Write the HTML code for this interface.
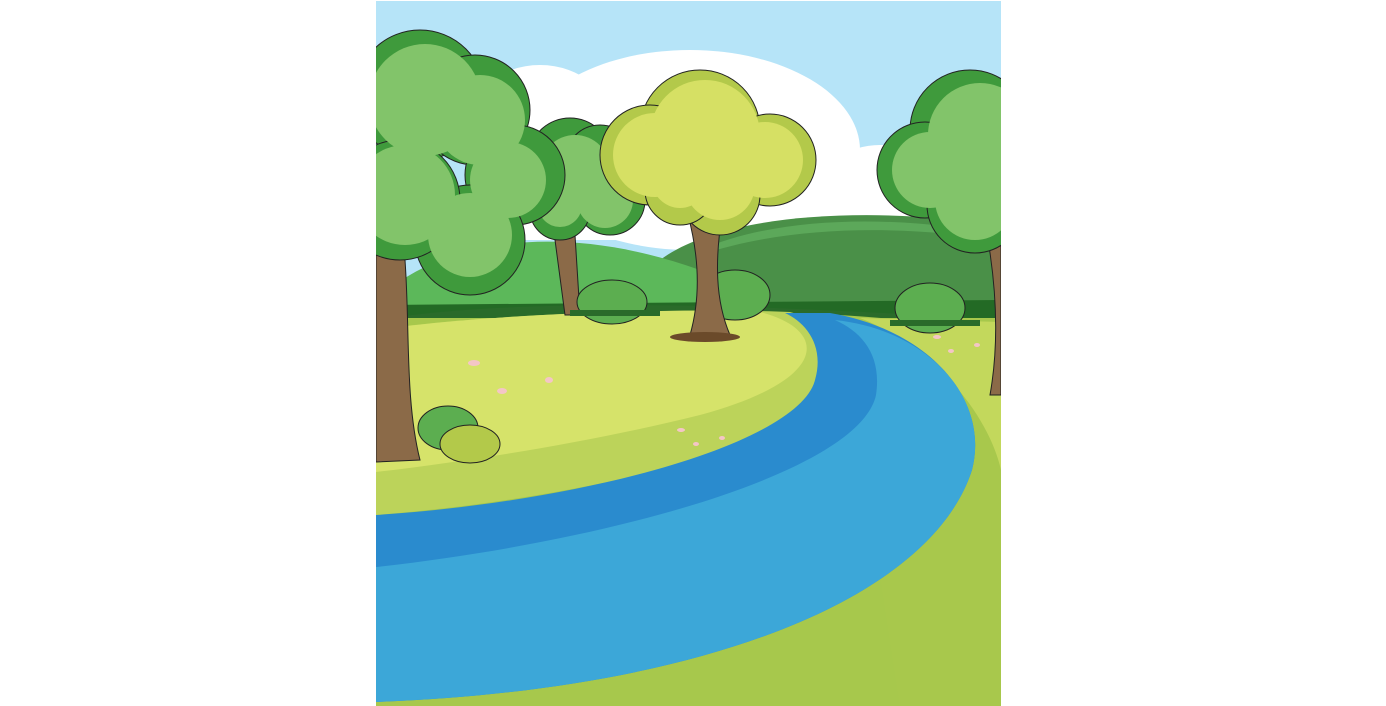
<!DOCTYPE html>
<html><head><meta charset="utf-8"><style>
html,body{margin:0;padding:0;background:#fff;width:1386px;height:706px;overflow:hidden}
svg{display:block}
</style></head><body>
<svg width="1386" height="706" viewBox="0 0 1386 706" xmlns="http://www.w3.org/2000/svg">
<defs><clipPath id="c"><rect x="376" y="1" width="625" height="705"/></clipPath></defs>
<g clip-path="url(#c)">
<rect x="376" y="1" width="625" height="705" fill="#b6e4f8"/>
<!-- cloud -->
<g fill="#fff">
<ellipse cx="690" cy="150" rx="170" ry="100"/>
<ellipse cx="540" cy="130" rx="75" ry="65"/>
<ellipse cx="880" cy="190" rx="60" ry="45"/>
<rect x="470" y="150" width="460" height="90"/>
</g>
<!-- hills -->
<path d="M660 260 C720 215 860 205 1001 225 L1001 330 L660 330Z" fill="#4a9048"/>
<path d="M700 250 C780 215 900 215 1001 235 L1001 240 C900 225 790 225 700 255Z" fill="#5ca85a"/>
<path d="M376 300 C440 240 560 220 700 270 L700 330 L376 330Z" fill="#5cb85a"/>
<path d="M376 305 L1001 300 L1001 335 L376 335Z" fill="#236a25"/>
<path d="M376 320 C500 300 700 300 1001 320 L1001 330 L376 335Z" fill="#2a6b2a"/>
<!-- ground -->
<rect x="376" y="318" width="625" height="388" fill="#a7c84c"/>
<path d="M376 330 C500 312 700 308 790 312 C860 330 860 400 760 440 C650 480 500 505 376 515Z" fill="#bcd35a"/>
<path d="M376 330 C500 312 700 308 760 312 C830 330 830 380 700 415 C600 440 480 460 376 472Z" fill="#d6e36a"/>
<path d="M840 315 C920 320 1001 330 1001 330 L1001 706 L900 706Z" fill="#a8c84c"/>
<path d="M860 318 L1001 322 L1001 470 C990 420 940 350 860 318Z" fill="#c3d85c"/>
<!-- river -->
<path d="M376 515 C600 500 800 440 815 380 C825 345 805 322 785 313 L830 313 C930 330 990 400 972 470 C930 600 700 690 376 702Z" fill="#2a8bce"/>
<path d="M376 567 C620 540 860 470 876 395 C882 355 862 332 835 320 C930 330 990 400 972 470 C930 600 700 690 376 702Z" fill="#3ca7d8"/>
<!-- middle-left tree -->
<path d="M555 240 L565 315 L580 315 L575 235Z" fill="#8b6a48" stroke="#222" stroke-width="1"/>
<g fill="#3f9a3c" stroke="#222" stroke-width="1"><circle cx="570" cy="160" r="42"/><circle cx="610" cy="200" r="35"/><circle cx="560" cy="210" r="30"/><circle cx="600" cy="160" r="35"/></g>
<g fill="#82c46a"><circle cx="575" cy="170" r="35"/><circle cx="605" cy="200" r="28"/><circle cx="560" cy="205" r="22"/></g>
<!-- bushes -->
<g fill="#5cae50" stroke="#222" stroke-width="1">
<ellipse cx="612" cy="302" rx="35" ry="22"/><ellipse cx="735" cy="295" rx="35" ry="25"/><ellipse cx="930" cy="308" rx="35" ry="25"/>
</g>
<g fill="#2a6b2a"><rect x="570" y="310" width="90" height="6"/><rect x="890" y="320" width="90" height="6"/></g>
<!-- yellow tree -->
<path d="M688 215 C700 260 700 300 690 335 L730 335 C715 300 715 260 722 215Z" fill="#8b6a48" stroke="#222" stroke-width="1"/>
<ellipse cx="705" cy="337" rx="35" ry="5" fill="#6b4a2a"/>
<g fill="#b3c94a" stroke="#222" stroke-width="1"><circle cx="700" cy="130" r="60"/><circle cx="650" cy="155" r="50"/><circle cx="770" cy="160" r="46"/><circle cx="720" cy="195" r="40"/><circle cx="680" cy="190" r="35"/></g>
<g fill="#d6e064"><circle cx="705" cy="135" r="55"/><circle cx="655" cy="155" r="42"/><circle cx="765" cy="160" r="38"/><circle cx="720" cy="185" r="35"/><circle cx="680" cy="180" r="28"/></g>
<!-- right tree -->
<path d="M988 240 C998 300 998 350 990 395 L1001 395 L1001 240Z" fill="#8b6a48" stroke="#222" stroke-width="1"/>
<g fill="#3f9a3c" stroke="#222" stroke-width="1"><circle cx="970" cy="130" r="60"/><circle cx="925" cy="170" r="48"/><circle cx="975" cy="205" r="48"/></g>
<g fill="#82c46a"><circle cx="980" cy="135" r="52"/><circle cx="930" cy="170" r="38"/><circle cx="975" cy="200" r="40"/></g>
<!-- left tree -->
<path d="M376 250 L405 260 C410 330 405 400 420 460 L376 462Z" fill="#8b6a48" stroke="#222" stroke-width="1"/>
<g fill="#3f9a3c" stroke="#222" stroke-width="1"><circle cx="420" cy="95" r="65"/><circle cx="475" cy="110" r="55"/><circle cx="515" cy="175" r="50"/><circle cx="470" cy="240" r="55"/><circle cx="400" cy="200" r="60"/></g>
<g fill="#82c46a"><circle cx="425" cy="100" r="56"/><circle cx="480" cy="120" r="45"/><circle cx="508" cy="180" r="38"/><circle cx="470" cy="235" r="42"/><circle cx="405" cy="195" r="50"/></g>
<g fill="#5cae50" stroke="#222" stroke-width="1"><ellipse cx="448" cy="428" rx="30" ry="22"/></g>
<g fill="#b3c94a" stroke="#222" stroke-width="1"><ellipse cx="470" cy="444" rx="30" ry="19"/></g>
<!-- flowers -->
<g fill="#f4c6c6"><ellipse cx="474" cy="363" rx="6" ry="3"/><ellipse cx="502" cy="391" rx="5" ry="3"/><ellipse cx="549" cy="380" rx="4" ry="3"/><ellipse cx="681" cy="430" rx="4" ry="2"/><ellipse cx="722" cy="438" rx="3" ry="2"/><ellipse cx="696" cy="444" rx="3" ry="2"/><ellipse cx="937" cy="337" rx="4" ry="2"/><ellipse cx="951" cy="351" rx="3" ry="2"/><ellipse cx="977" cy="345" rx="3" ry="2"/></g>
</g>
</svg>
</body></html>
